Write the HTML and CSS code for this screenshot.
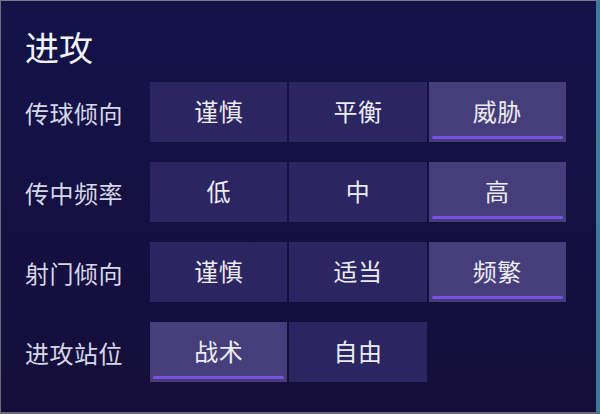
FILE: index.html
```html
<!DOCTYPE html>
<html lang="zh-CN">

<head>
    <meta charset="UTF-8">
    <title>进攻</title>
    <link rel="stylesheet" href="styles.css">
</head>

<body>
    <div class="panel">
        <h1 class="panel-title">进攻</h1>

        <div class="option-row">
            <span class="option-label">传球倾向</span>
            <div class="option-group">
                <button class="option">谨慎</button>
                <button class="option">平衡</button>
                <button class="option active">威胁</button>
            </div>
        </div>

        <div class="option-row">
            <span class="option-label">传中频率</span>
            <div class="option-group">
                <button class="option">低</button>
                <button class="option">中</button>
                <button class="option active">高</button>
            </div>
        </div>

        <div class="option-row">
            <span class="option-label">射门倾向</span>
            <div class="option-group">
                <button class="option">谨慎</button>
                <button class="option">适当</button>
                <button class="option active">频繁</button>
            </div>
        </div>

        <div class="option-row">
            <span class="option-label">进攻站位</span>
            <div class="option-group">
                <button class="option active">战术</button>
                <button class="option">自由</button>
            </div>
        </div>
    </div>
</body>

</html>
```

FILE: styles.css
```css
html,
body {
    margin: 0;
    height: 100%;
}

body {
    font-family: "Noto Sans CJK SC", "Noto Sans", sans-serif;
    background: #14103e;
    overflow: hidden;
}

/* 패널 전체 (테두리 포함) */
.panel {
    box-sizing: border-box;
    height: 414px;
    padding: 26px 0 0 24px;
    background: linear-gradient(180deg, #13134a 0%, #141042 50%, #150e3a 100%);
    border-top: 1px solid #7c7c86;
    border-left: 1px solid #6c6c78;
    border-bottom: 2px solid #6a6a74;
    border-right: 4px solid #3a7c9c;
}

.panel-title {
    margin: 0 0 15px;
    font-size: 34px;
    line-height: 40px;
    font-weight: normal;
    color: #f2f2fa;
}

/* 옵션 행 */
.option-row {
    display: flex;
    align-items: center;
    height: 60px;
    margin-bottom: 20px;
}

.option-label {
    width: 125px;
    font-size: 24px;
    color: #d6d6e6;
    letter-spacing: 0.5px;
}

.option-group {
    display: grid;
    grid-template-columns: repeat(3, 1fr);
    width: 416px;
    gap: 2px;
    height: 100%;
}

.option {
    position: relative;
    border: none;
    padding: 0 0 3px;
    margin: 0;
    background: #2b2561;
    color: #ececf4;
    font-family: inherit;
    font-size: 24px;
    letter-spacing: 0.5px;
    cursor: pointer;
}

.option.active {
    background: #453e7b;
}

.option.active::after {
    content: "";
    position: absolute;
    left: 3px;
    right: 3px;
    bottom: 3px;
    height: 3px;
    border-radius: 2px;
    background: #7a4fe4;
}
```
